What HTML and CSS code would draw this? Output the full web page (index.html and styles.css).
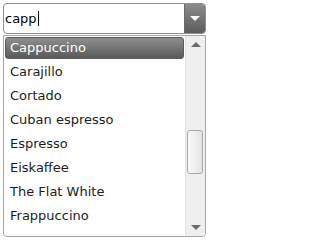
FILE: index.html
```html
<!DOCTYPE html>
<html>
<head>
<meta charset="utf-8">
<link rel="stylesheet" href="styles.css">
</head>
<body>
<div class="combo">
  <div class="field">
    <div class="value">capp<span class="caret"></span></div>
    <div class="toggle"><span class="tri-down-white"></span></div>
  </div>
  <div class="popup">
    <ul class="items">
      <li class="item selected">Cappuccino</li>
      <li class="item">Carajillo</li>
      <li class="item">Cortado</li>
      <li class="item">Cuban espresso</li>
      <li class="item">Espresso</li>
      <li class="item">Eiskaffee</li>
      <li class="item">The Flat White</li>
      <li class="item">Frappuccino</li>
    </ul>
    <div class="scrollbar">
      <div class="arrow"><span class="tri-up"></span></div>
      <div class="track"><div class="thumb"></div></div>
      <div class="arrow"><span class="tri-down"></span></div>
    </div>
  </div>
</div>
</body>
</html>
```
FILE: styles.css
```css
html, body {
  margin: 0;
  padding: 0;
  background: #ffffff;
}
body {
  padding: 3px;
  font-family: "DejaVu Sans", Verdana, sans-serif;
  font-size: 13px;
  color: #1c1c1c;
}
.combo {
  width: 203px;
}
.field {
  display: flex;
  height: 31px;
  box-sizing: border-box;
  border: 1px solid #8e8e8e;
  border-radius: 4px;
  overflow: hidden;
}
.value {
  flex: 1;
  display: flex;
  align-items: center;
  padding-left: 1px;
  color: #000;
  font-size: 13px;
}
.caret {
  display: inline-block;
  width: 1px;
  height: 15px;
  background: #000;
  margin-left: 1px;
}
.toggle {
  width: 20px;
  display: flex;
  align-items: center;
  justify-content: center;
  background: linear-gradient(#8c8c8c, #5c5c5c);
  border-left: 1px solid #6a6a6a;
}
.tri-down-white {
  width: 0;
  height: 0;
  border-left: 5px solid transparent;
  border-right: 5px solid transparent;
  border-top: 5px solid #ffffff;
}
.popup {
  display: flex;
  height: 202px;
  box-sizing: border-box;
  margin-top: 1px;
  border: 1px solid #a6a6a6;
  border-radius: 0 0 4px 4px;
  overflow: hidden;
}
.items {
  flex: 1;
  display: flex;
  flex-direction: column;
  gap: 2px;
  list-style: none;
  margin: 0;
  padding: 1px 1px 0 1px;
}
.item {
  height: 22px;
  line-height: 22px;
  padding-left: 5px;
  border-radius: 3px;
  white-space: nowrap;
}
.item.selected {
  background: linear-gradient(#8e8e8e, #5a5a5a);
  color: #ffffff;
  line-height: 20px;
  box-sizing: border-box;
  border: 1px solid #5a5a5a;
  padding-left: 4px;
}
.scrollbar {
  width: 19px;
  display: flex;
  flex-direction: column;
  background: #efefef;
  border-left: 1px solid #e2e2e2;
}
.arrow {
  height: 17px;
  display: flex;
  align-items: center;
  justify-content: center;
}
.tri-up {
  width: 0;
  height: 0;
  border-left: 5px solid transparent;
  border-right: 5px solid transparent;
  border-bottom: 5px solid #6b6b6b;
}
.tri-down {
  width: 0;
  height: 0;
  border-left: 5px solid transparent;
  border-right: 5px solid transparent;
  border-top: 5px solid #6b6b6b;
}
.track {
  flex: 1;
  padding-top: 77px;
}
.thumb {
  width: 16px;
  height: 44px;
  margin-left: 1px;
  box-sizing: border-box;
  border: 1px solid #a8a8a8;
  border-radius: 3px;
  background: linear-gradient(to right, #fafafa, #e4e4e4);
}
```
